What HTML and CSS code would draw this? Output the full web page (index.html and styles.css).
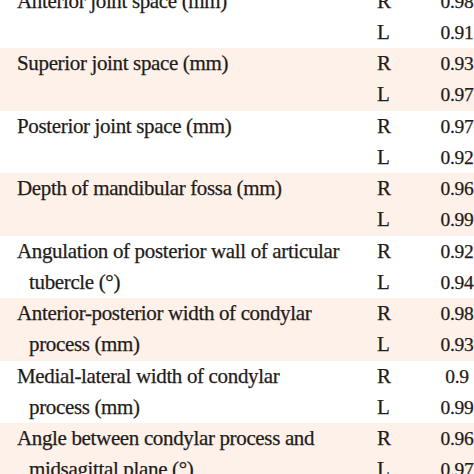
FILE: index.html
```html
<!DOCTYPE html>
<html lang="en">
<head>
<meta charset="utf-8">
<title>Table</title>
<link rel="stylesheet" href="styles.css">
</head>
<body>
<div class="table">
  <div class="group">
    <div class="label"><span class="line">Anterior joint space (mm)</span></div>
    <div class="side">R</div><div class="val">0.98</div>
    <div class="side">L</div><div class="val">0.91</div>
  </div>
  <div class="group shaded">
    <div class="label"><span class="line">Superior joint space (mm)</span></div>
    <div class="side">R</div><div class="val">0.93</div>
    <div class="side">L</div><div class="val">0.97</div>
  </div>
  <div class="group">
    <div class="label"><span class="line">Posterior joint space (mm)</span></div>
    <div class="side">R</div><div class="val">0.97</div>
    <div class="side">L</div><div class="val">0.92</div>
  </div>
  <div class="group shaded">
    <div class="label"><span class="line">Depth of mandibular fossa (mm)</span></div>
    <div class="side">R</div><div class="val">0.96</div>
    <div class="side">L</div><div class="val">0.99</div>
  </div>
  <div class="group">
    <div class="label"><span class="line">Angulation of posterior wall of articular</span><span class="line cont">tubercle (°)</span></div>
    <div class="side">R</div><div class="val">0.92</div>
    <div class="side">L</div><div class="val">0.94</div>
  </div>
  <div class="group shaded">
    <div class="label"><span class="line">Anterior-posterior width of condylar</span><span class="line cont">process (mm)</span></div>
    <div class="side">R</div><div class="val">0.98</div>
    <div class="side">L</div><div class="val">0.93</div>
  </div>
  <div class="group">
    <div class="label"><span class="line">Medial-lateral width of condylar</span><span class="line cont">process (mm)</span></div>
    <div class="side">R</div><div class="val">0.9</div>
    <div class="side">L</div><div class="val">0.99</div>
  </div>
  <div class="group shaded">
    <div class="label"><span class="line">Angle between condylar process and</span><span class="line cont">midsagittal plane (°)</span></div>
    <div class="side">R</div><div class="val">0.96</div>
    <div class="side">L</div><div class="val">0.97</div>
  </div>
</div>
</body>
</html>
```
FILE: styles.css
```css
html, body {
  margin: 0;
  padding: 0;
  background: #ffffff;
  overflow: hidden;
}
body {
  width: 474px;
  height: 474px;
  font-family: "Liberation Serif", "Times New Roman", serif;
  font-size: 21px;
  letter-spacing: -0.35px;
  color: #1f1c1b;
  -webkit-text-stroke: 0.25px #1f1c1b;
}
.table {
  margin-top: -14.5px;
}
.group {
  display: grid;
  grid-template-columns: 360px 63px 34px;
  grid-template-rows: 31.25px 31.25px;
  line-height: 31.25px;
  padding-left: 17px;
}
.shaded {
  background: #fdf1e9;
}
.label {
  grid-column: 1;
  grid-row: 1 / span 2;
  display: flex;
  flex-direction: column;
  white-space: nowrap;
}
.line {
  display: block;
  height: 31.25px;
}
.cont {
  padding-left: 12px;
}
.side {
  grid-column: 2;
  letter-spacing: 0;
}
.val {
  grid-column: 3;
  text-align: center;
  font-size: 19.5px;
  letter-spacing: -0.3px;
  white-space: nowrap;
}
```
